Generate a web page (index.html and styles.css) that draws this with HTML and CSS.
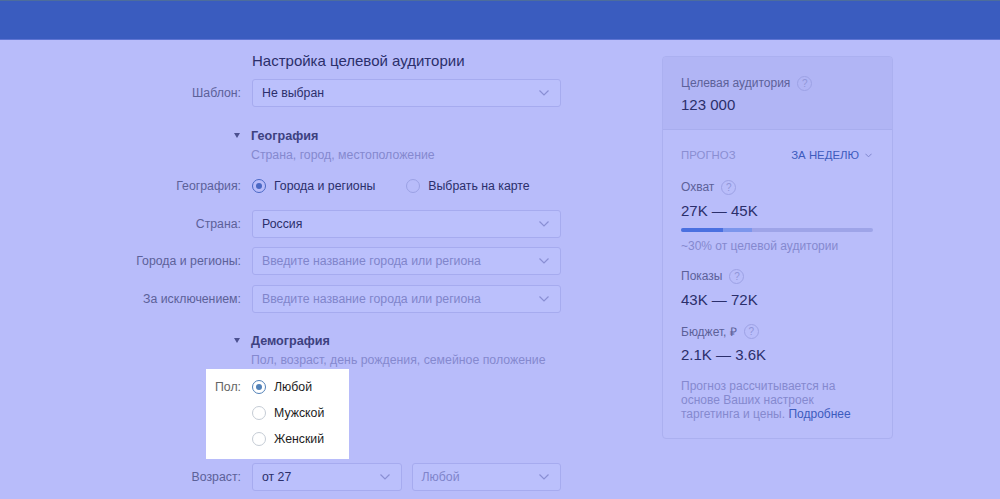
FILE: index.html
```html
<!DOCTYPE html>
<html lang="ru">
<head>
<meta charset="utf-8">
<title>Настройка целевой аудитории</title>
<link rel="stylesheet" href="styles.css">
</head>
<body>
<header class="topbar"></header>
<main class="page">
  <section class="form">
    <div class="row">
      <h1 class="form-title">Настройка целевой аудитории</h1>
    </div>

    <div class="row row--field row--first">
      <span class="row-label">Шаблон:</span>
      <div class="select"><span class="select-value">Не выбран</span><svg class="chev" viewBox="0 0 10 6"><polyline points="0.5,0.5 5,5 9.5,0.5"/></svg></div>
    </div>

    <div class="row section-head">
      <span class="tri"></span>
      <div>
        <div class="section-title">География</div>
        <div class="section-sub">Страна, город, местоположение</div>
      </div>
    </div>

    <div class="row row--radios">
      <span class="row-label">География:</span>
      <div class="radio-line">
        <span class="radio"><span class="radio-dot is-on"></span>Города и регионы</span>
        <span class="radio"><span class="radio-dot"></span>Выбрать на карте</span>
      </div>
    </div>

    <div class="row row--field row--country">
      <span class="row-label">Страна:</span>
      <div class="select"><span class="select-value">Россия</span><svg class="chev" viewBox="0 0 10 6"><polyline points="0.5,0.5 5,5 9.5,0.5"/></svg></div>
    </div>

    <div class="row row--field row--next">
      <span class="row-label">Города и регионы:</span>
      <div class="select"><span class="select-value is-placeholder">Введите название города или региона</span><svg class="chev" viewBox="0 0 10 6"><polyline points="0.5,0.5 5,5 9.5,0.5"/></svg></div>
    </div>

    <div class="row row--field row--next">
      <span class="row-label">За исключением:</span>
      <div class="select"><span class="select-value is-placeholder">Введите название города или региона</span><svg class="chev" viewBox="0 0 10 6"><polyline points="0.5,0.5 5,5 9.5,0.5"/></svg></div>
    </div>

    <div class="row section-head">
      <span class="tri"></span>
      <div>
        <div class="section-title">Демография</div>
        <div class="section-sub">Пол, возраст, день рождения, семейное положение</div>
      </div>
    </div>

    <div class="row row--gender">
      <span class="row-label row-label--top">Пол:</span>
      <div class="radio-stack">
        <span class="radio"><span class="radio-dot is-on"></span>Любой</span>
        <span class="radio"><span class="radio-dot"></span>Мужской</span>
        <span class="radio"><span class="radio-dot"></span>Женский</span>
      </div>
    </div>

    <div class="row row--field row--age">
      <span class="row-label">Возраст:</span>
      <div class="age-pair">
        <div class="select"><span class="select-value">от 27</span><svg class="chev" viewBox="0 0 10 6"><polyline points="0.5,0.5 5,5 9.5,0.5"/></svg></div>
        <div class="select"><span class="select-value is-placeholder">Любой</span><svg class="chev" viewBox="0 0 10 6"><polyline points="0.5,0.5 5,5 9.5,0.5"/></svg></div>
      </div>
    </div>
  </section>

  <aside class="forecast">
    <div class="forecast-top">
      <div class="f-label">Целевая аудитория <span class="help">?</span></div>
      <div class="f-value f-value--audience">123 000</div>
    </div>
    <div class="forecast-body">
      <div class="f-head">
        <span class="f-caption">Прогноз</span>
        <span class="f-period">За неделю <svg class="f-chev" viewBox="0 0 8 5"><polyline points="0.5,0.5 4,4 7.5,0.5"/></svg></span>
      </div>
      <div class="f-label f-label--reach">Охват <span class="help">?</span></div>
      <div class="f-value">27K — 45K</div>
      <div class="bar"><span class="bar-fill" style="width:22%"></span><span class="bar-fill bar-fill--light" style="width:15%"></span></div>
      <div class="f-note">~30% от целевой аудитории</div>
      <div class="f-label f-label--gap">Показы <span class="help">?</span></div>
      <div class="f-value">43K — 72K</div>
      <div class="f-label f-label--gap">Бюджет, ₽ <span class="help">?</span></div>
      <div class="f-value">2.1K — 3.6K</div>
      <div class="f-foot">
        <span class="f-foot-line">Прогноз рассчитывается на</span>
        <span class="f-foot-line">основе Ваших настроек</span>
        <span class="f-foot-line">таргетинга и цены. <a class="f-link">Подробнее</a></span>
      </div>
    </div>
  </aside>
</main>
</body>
</html>
```

FILE: styles.css
```css
* { box-sizing: border-box; }

html, body {
  margin: 0;
  padding: 0;
}

body {
  background: #b8bcfa;
  font-family: "Liberation Sans", Arial, sans-serif;
  font-size: 12.3px;
  color: #2b2f6b;
  height: 499px;
  overflow: hidden;
}

.topbar {
  height: 40px;
  background: #3a5cbf;
  border-top: 1px solid #4d6d9c;
  border-bottom: 1px solid #5e74d2;
}

.page {
  display: flex;
  align-items: flex-start;
  gap: 101px;
}

/* ---------- form ---------- */
.form {
  width: 561px;
  padding-top: 11px;
}

.row {
  display: grid;
  grid-template-columns: 241px 309px;
  column-gap: 11px;
  align-items: center;
}

.row-label {
  text-align: right;
  color: #5c6199;
  font-size: 12.3px;
  line-height: 20px;
  white-space: nowrap;
}

.row-label--top { align-self: start; }

.form-title {
  grid-column: 2;
  margin: 0;
  font-size: 15px;
  font-weight: normal;
  line-height: 20px;
  color: #2b2f6b;
}

.row--first { margin-top: 8px; }
.row--country { margin-top: 14px; }
.row--next { margin-top: 9.5px; }

.select {
  height: 28px;
  border: 1px solid #a6abef;
  border-radius: 3px;
  background: #bbc0fc;
  display: flex;
  align-items: center;
  justify-content: space-between;
  padding: 0 11px 0 9px;
}

.select-value {
  color: #2b2f6b;
  font-size: 12.3px;
  white-space: nowrap;
}

.select-value.is-placeholder { color: #8085cb; }

.chev {
  width: 10px;
  height: 6px;
  fill: none;
  stroke: #8a8fd4;
  stroke-width: 1.2;
}

.section-head {
  margin-top: 19.5px;
  align-items: start;
}

.tri {
  justify-self: end;
  margin-top: 6px;
  margin-right: 1px;
  width: 0;
  height: 0;
  border-left: 3.5px solid transparent;
  border-right: 3.5px solid transparent;
  border-top: 5px solid #4c5190;
}

.section-head > div { margin-left: -1px; }

.section-title {
  font-weight: bold;
  font-size: 12.6px;
  line-height: 18px;
  color: #3d4180;
}

.section-sub {
  margin-top: 2px;
  font-size: 12.3px;
  line-height: 16px;
  color: #8589cf;
}

.row--radios { margin-top: 13px; }

.radio-line {
  display: flex;
  gap: 31px;
}

.radio {
  display: flex;
  align-items: center;
  gap: 8px;
  line-height: 20px;
  font-size: 12.3px;
  color: #2b2f6b;
}

.radio-dot {
  width: 14px;
  height: 14px;
  border-radius: 50%;
  border: 1px solid #9ba1e4;
  display: flex;
  align-items: center;
  justify-content: center;
  flex: none;
}

.radio-dot.is-on { border-color: #4a68c4; }
.radio-dot.is-on::after {
  content: "";
  width: 6px;
  height: 6px;
  border-radius: 50%;
  background: #4a68c4;
}

/* highlighted gender row */
.row--gender {
  position: relative;
  margin-top: 8.5px;
  align-items: start;
}

.row--gender::before {
  content: "";
  position: absolute;
  left: 206px;
  top: -7.5px;
  width: 143px;
  height: 90px;
  background: #ffffff;
}

.row--gender > * { position: relative; }

.row--gender .row-label { color: #656565; }
.row--gender .radio { color: #1d1d1d; }
.row--gender .radio-dot { border-color: #c5ccd5; }
.row--gender .radio-dot.is-on { border-color: #5181b8; }
.row--gender .radio-dot.is-on::after { background: #5181b8; }

.radio-stack {
  display: flex;
  flex-direction: column;
  gap: 6px;
}

.row--age { margin-top: 14px; }

.age-pair {
  display: grid;
  grid-template-columns: 1fr 1fr;
  gap: 10px;
}

/* ---------- forecast panel ---------- */
.forecast {
  margin-top: 16px;
  width: 231px;
  border: 1px solid #abb0f0;
  border-radius: 4px;
  background: #b9bdfa;
  overflow: hidden;
}

.forecast-top {
  background: #b1b5f5;
  padding: 18px 18px 14px;
  border-bottom: 1px solid #a8adee;
}

.forecast-body {
  padding: 17px 18px 17px;
}

.f-label {
  display: flex;
  align-items: center;
  gap: 7px;
  font-size: 12px;
  line-height: 16px;
  color: #5c6199;
}

.help {
  width: 15px;
  height: 15px;
  border-radius: 50%;
  border: 1px solid #9da2e5;
  color: #9095d8;
  font-size: 10px;
  line-height: 13px;
  text-align: center;
}

.f-value {
  margin-top: 5.5px;
  font-size: 15px;
  line-height: 20px;
  color: #2b2f6b;
}

.f-value--audience { margin-top: 4px; }

.f-head {
  display: flex;
  justify-content: space-between;
  align-items: center;
  line-height: 16px;
  font-size: 11.4px;
  text-transform: uppercase;
  padding-right: 2px;
}

.f-caption { color: #8a8ed2; }

.f-period {
  color: #3d5bbd;
  display: flex;
  align-items: center;
  gap: 6px;
}

.f-chev {
  width: 7px;
  height: 5px;
  fill: none;
  stroke: #7d83cc;
  stroke-width: 1.1;
}

.f-label--reach { margin-top: 16px; }
.f-label--gap { margin-top: 14px; }

.bar {
  margin-top: 7.5px;
  width: 192px;
  height: 4px;
  border-radius: 2px;
  background: #9ea4e8;
  display: flex;
  overflow: hidden;
}

.bar-fill { background: #4a70e0; }
.bar-fill--light { background: #7c96ec; }

.f-note {
  margin-top: 6px;
  font-size: 12px;
  line-height: 16px;
  color: #8589cf;
}

.f-foot {
  margin-top: 14px;
  display: flex;
  flex-direction: column;
  font-size: 12px;
  line-height: 14px;
  color: #8589cf;
}

.f-foot-line { white-space: nowrap; }

.f-link { color: #3d5bbd; }
```
